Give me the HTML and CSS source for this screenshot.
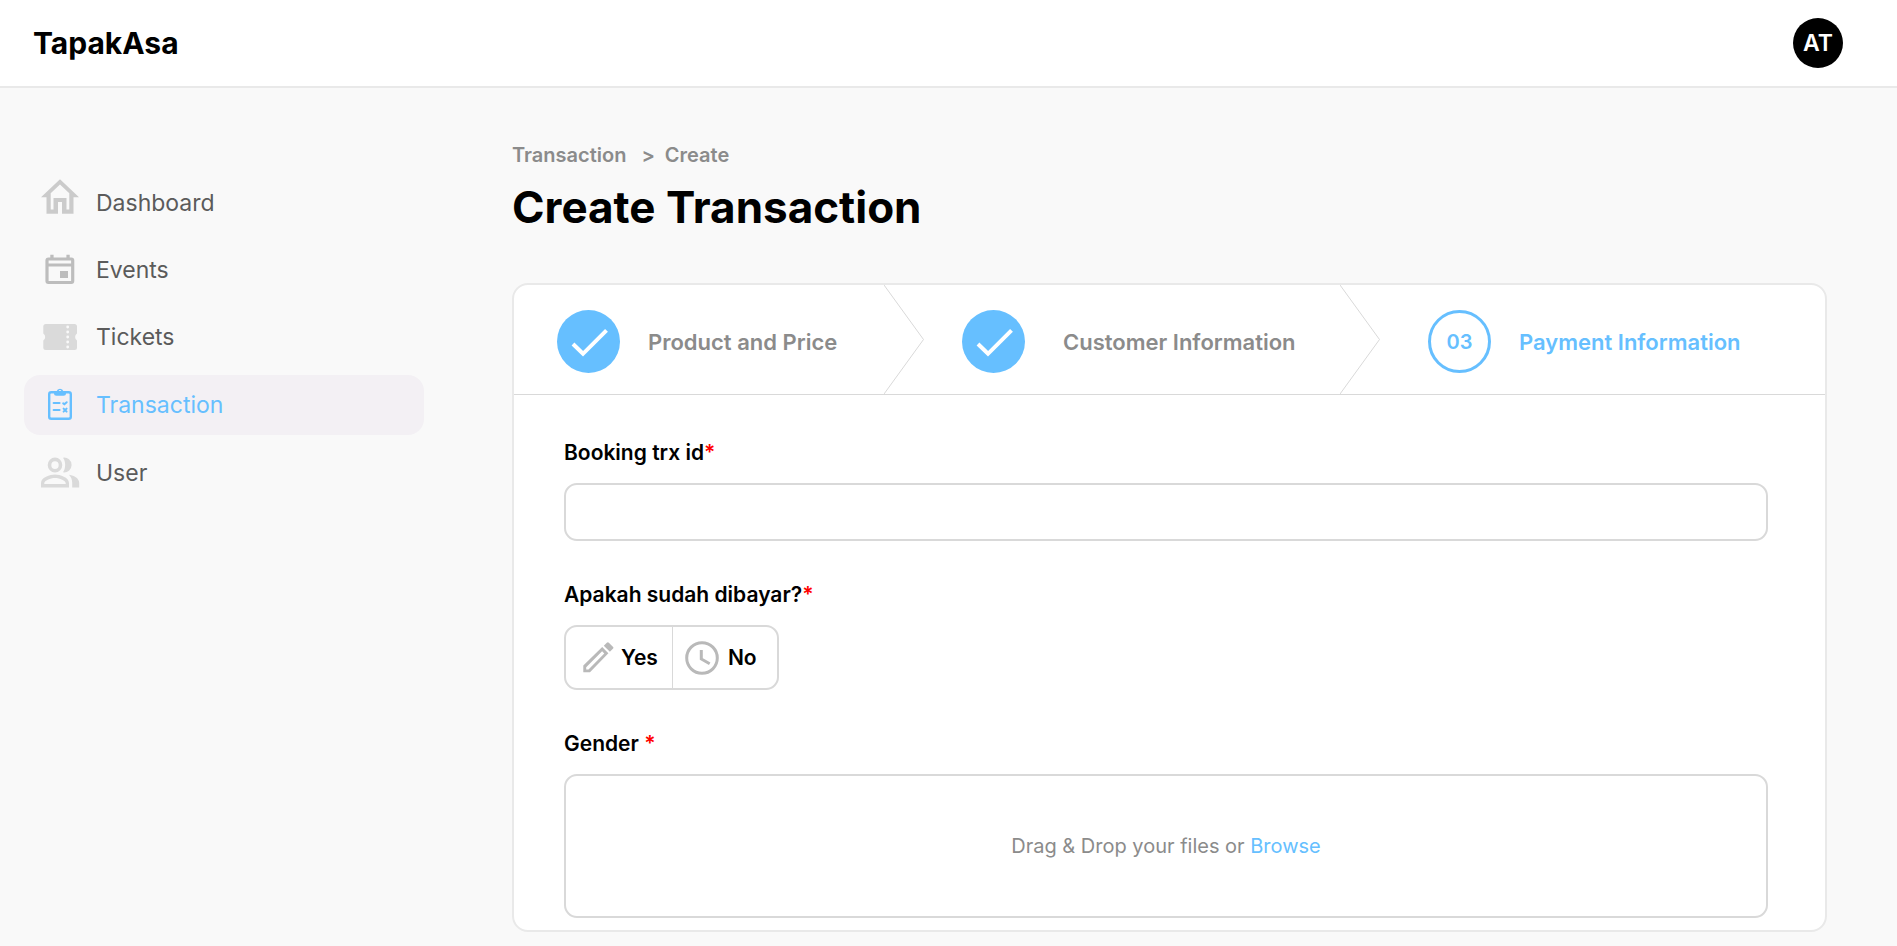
FILE: index.html
```html
<!DOCTYPE html>
<html lang="en">
<head>
<meta charset="utf-8">
<meta name="viewport" content="width=device-width, initial-scale=1">
<title>TapakAsa - Create Transaction</title>
<link rel="stylesheet" href="styles.css">
</head>
<body>
<header class="topbar">
  <a class="brand" href="#">TapakAsa</a>
  <button class="avatar" type="button" aria-label="Account">AT</button>
</header>
<div class="layout">
  <nav class="sidebar">
    <a class="nav-item" href="#">
      <svg class="nav-icon icon-home" viewBox="0 0 48 48" aria-hidden="true"><path fill-rule="evenodd" d="M24 .3 5 18.300h5.500v16.400H22V23h4v11.700h11.500V18.300H43ZM24 5.500l9.300 8.800v16.200h-2.800V19h-13v11.500h-2.800V14.300Z"/></svg>
      <span>Dashboard</span>
    </a>
    <a class="nav-item" href="#">
      <svg class="nav-icon icon-calendar" viewBox="0 0 48 48" aria-hidden="true"><path fill-rule="evenodd" d="M14.300 8.700h3.300v2.800h12.800V8.700h3.300v2.800h1.600a3 3 0 0 1 3 3V35a3 3 0 0 1-3 3H12.400a3 3 0 0 1-3-3V14.500a3 3 0 0 1 3-3h1.900ZM12.600 14.600v2.900h22.500v-2.900ZM12.600 20.500v14.400h22.500V20.500ZM24 25h8v7h-8Z"/></svg>
      <span>Events</span>
    </a>
    <a class="nav-item" href="#">
      <svg class="nav-icon icon-ticket" viewBox="0 0 48 48" aria-hidden="true"><path fill-rule="evenodd" d="M9.800 11h28.700a2.500 2.500 0 0 1 2.500 2.500v7.100a4 4 0 0 0 0 6.800v7.100a2.500 2.500 0 0 1-2.500 2.500H9.800a2.500 2.500 0 0 1-2.500-2.500v-7.100a4 4 0 0 0 0-6.800v-7.100A2.500 2.500 0 0 1 9.800 11Z"/><g class="ticket-holes"><circle cx="31.700" cy="14" r="1.400"/><circle cx="31.700" cy="19" r="1.400"/><circle cx="31.700" cy="24" r="1.400"/><circle cx="31.700" cy="29" r="1.400"/><circle cx="31.700" cy="34" r="1.400"/></g></svg>
      <span>Tickets</span>
    </a>
    <a class="nav-item active" href="#" aria-current="page">
      <svg class="nav-icon icon-clipboard" viewBox="0 0 48 48" aria-hidden="true"><rect class="line" x="13.200" y="11.200" width="21.600" height="26.600" rx="2"/><path fill-rule="evenodd" d="M18 10.300h2.600a3.500 3.500 0 0 1 6.800 0H30v2a2.500 2.500 0 0 1-2.500 2.500h-7a2.500 2.500 0 0 1-2.500-2.500ZM24 9a1.300 1.300 0 1 0 0 2.600A1.300 1.300 0 0 0 24 9Z"/><path class="line mark" d="M17.600 22h6M17.600 29h6M27.200 22.400l1.200.8 2.300-2M27.600 27.600l3 3M30.600 27.600l-3 3"/></svg>
      <span>Transaction</span>
    </a>
    <a class="nav-item" href="#">
      <svg class="nav-icon icon-users" viewBox="0 0 48 48" aria-hidden="true"><path fill-rule="evenodd" d="M19 8.500a7.300 7.500 0 1 0 0 15 7.300 7.500 0 1 0 0-15ZM19 12.200a3.700 3.900 0 1 1 0 7.800 3.700 3.900 0 1 1 0-7.800ZM5 38.500v-4.500C5 28.500 14 25.600 19 25.600s14 2.900 14 8.400v4.500ZM8.300 35h21.400v-1c0-2.200-6-5-10.700-5S8.300 31.800 8.300 34Z"/><path d="M27 8.700a7.400 7.400 0 1 1 0 14.600c2.900-3.800 2.900-10.800 0-14.600ZM33 25.800c5.600.9 10.200 3.700 10.200 8.200v4.500h-7V34c0-3.400-1.200-6.200-3.200-8.200Z"/></svg>
      <span>User</span>
    </a>
  </nav>
  <main class="content">
    <nav class="breadcrumb" aria-label="Breadcrumb">
      <a href="#">Transaction</a>
      <span class="separator">&gt;</span>
      <span>Create</span>
    </nav>
    <h1 class="title">Create Transaction</h1>
    <form class="card">
      <ol class="steps">
        <li class="step step-product">
          <svg class="badge done" viewBox="0 0 63 63" role="img" aria-label="Completed"><circle cx="31.500" cy="31.500" r="31.500"/><path d="M16 34l10 9.800L49.500 20.300"/></svg>
          <span>Product and Price</span>
          <svg class="chevron" viewBox="0 0 40 109" preserveAspectRatio="none" aria-hidden="true"><path d="M0 0l39.500 54.500L0 109"/></svg>
        </li>
        <li class="step step-customer">
          <svg class="badge done" viewBox="0 0 63 63" role="img" aria-label="Completed"><circle cx="31.500" cy="31.500" r="31.500"/><path d="M16 34l10 9.800L49.500 20.300"/></svg>
          <span>Customer Information</span>
          <svg class="chevron" viewBox="0 0 40 109" preserveAspectRatio="none" aria-hidden="true"><path d="M0 0l39.500 54.500L0 109"/></svg>
        </li>
        <li class="step step-payment" aria-current="step">
          <span class="badge number">03</span>
          <span>Payment Information</span>
        </li>
      </ol>
      <div class="fields">
        <div class="field">
          <label class="label" for="booking">Booking trx id<span class="required">*</span></label>
          <input class="input" id="booking" type="text" required>
        </div>
        <div class="field">
          <span class="label" id="paid-label">Apakah sudah dibayar?<span class="required">*</span></span>
          <div class="choice" role="group" aria-labelledby="paid-label">
            <button class="option option-yes" type="button">
              <svg class="option-icon" viewBox="0 0 31 31" aria-hidden="true"><path fill-rule="evenodd" d="M.3 30.300v-6.700L19.200 5l6.200 6.200L7 30.300ZM3.200 27.400h2.300L21.300 11.500l-2.200-2.200L3.200 25.200Z"/><path d="M20.800 3.700l3-3a1.500 1.500 0 0 1 2.100 0l4 4a1.500 1.500 0 0 1 0 2.100l-3 3Z"/></svg>
              <span>Yes</span>
            </button>
            <button class="option option-no" type="button">
              <svg class="option-icon clock" viewBox="0 0 34 34" aria-hidden="true"><circle cx="17" cy="17" r="15.300"/><path d="M16.300 9v9l8.400 4.800"/></svg>
              <span>No</span>
            </button>
          </div>
        </div>
        <div class="field">
          <span class="label" id="file-label">Gender <span class="required">*</span></span>
          <div class="dropzone" role="group" aria-labelledby="file-label">
            <p>Drag &amp; Drop your files or <button class="browse" type="button">Browse</button></p>
          </div>
        </div>
      </div>
    </form>
  </main>
</div>
</body>
</html>
```

FILE: styles.css
```css
* {
  box-sizing: border-box;
}

body {
  margin: 0;
  min-height: 100vh;
  background: #f9f9f9;
  color: #000;
  font-family: Inter, "Liberation Sans", sans-serif;
}

a {
  color: inherit;
  text-decoration: none;
}

button {
  padding: 0;
  border: 0;
  background: none;
  color: inherit;
  font: inherit;
  cursor: pointer;
}

.topbar {
  display: flex;
  align-items: center;
  justify-content: space-between;
  height: 88px;
  padding: 0 54px 0 33px;
  border-bottom: 2px solid #e9e9e9;
  background: #fff;
}

.brand {
  font-size: 30px;
  font-weight: 700;
}

.avatar {
  width: 50px;
  height: 50px;
  border-radius: 50%;
  background: #000;
  color: #fff;
  font-size: 23px;
  font-weight: 600;
}

.layout {
  display: grid;
  grid-template-columns: 400px minmax(0, 1fr);
  column-gap: 88px;
  padding: 0 70px 13px 24px;
}

.sidebar {
  display: flex;
  flex-direction: column;
  gap: 9px;
  padding-top: 86px;
}

.nav-item {
  display: flex;
  align-items: center;
  gap: 12px;
  height: 58px;
  padding-left: 12px;
  border-radius: 16px;
  color: #5b5b5b;
  font-size: 23px;
}

.nav-item.active {
  height: 60px;
  background: #f3f0f4;
  color: #66bfff;
}

.nav-icon {
  width: 48px;
  height: 48px;
}

.icon-home {
  fill: #cbcbcb;
}

.icon-calendar {
  fill: #bdbdbd;
}

.icon-ticket,
.icon-users {
  fill: #dadada;
}

.ticket-holes {
  fill: #f9f9f9;
}

.icon-clipboard {
  fill: #66bfff;
}

.icon-clipboard .line {
  fill: none;
  stroke: #66bfff;
  stroke-width: 2.4;
}

.icon-clipboard .mark {
  stroke-width: 2;
  stroke-linecap: round;
}

.content {
  padding-top: 55px;
}

.breadcrumb {
  display: flex;
  color: #8b8b8b;
  font-size: 20px;
  font-weight: 600;
  line-height: 24px;
}

.separator {
  margin: 0 10px 0 15px;
}

.title {
  margin: 14px 0 50px;
  font-size: 44px;
  font-weight: 700;
  line-height: 52px;
}

.card {
  border: 2px solid #e9e9e9;
  border-radius: 16px;
  background: #fff;
}

.steps {
  display: grid;
  grid-template-columns: 410fr 456fr 445fr;
  margin: 0;
  padding: 0;
  border-bottom: 1px solid #d9d9d9;
  list-style: none;
}

.step {
  position: relative;
  display: flex;
  align-items: center;
  height: 109px;
  padding-top: 4px;
  color: #8b8b8b;
  font-size: 22px;
  font-weight: 600;
  white-space: nowrap;
}

.step-product {
  gap: 28px;
  padding-left: 43px;
}

.step-customer {
  gap: 38px;
  padding-left: 38px;
}

.step-payment {
  gap: 28px;
  padding-left: 48px;
  color: #66bfff;
}

.badge {
  flex: none;
  width: 63px;
  height: 63px;
}

.done {
  fill: #66bfff;
}

.done path {
  fill: none;
  stroke: #fff;
  stroke-width: 4;
}

.number {
  display: flex;
  align-items: center;
  justify-content: center;
  border: 3px solid #66bfff;
  border-radius: 50%;
  font-size: 20px;
}

.chevron {
  position: absolute;
  top: 0;
  right: 0;
  width: 40px;
  height: 100%;
  fill: none;
  stroke: #d9d9d9;
}

.fields {
  display: flex;
  flex-direction: column;
  gap: 41px;
  padding: 45px 57px 12px 50px;
}

.field {
  display: flex;
  flex-direction: column;
  align-items: flex-start;
  gap: 17px;
}

.label {
  font-size: 21px;
  font-weight: 600;
  line-height: 26px;
}

.required {
  color: #f00;
}

.input,
.choice,
.dropzone {
  border: 2px solid #d9d9d9;
  border-radius: 13px;
  background: #fff;
}

.input {
  width: 100%;
  height: 58px;
  padding: 0 16px;
  font: inherit;
  font-size: 21px;
}

.choice {
  display: flex;
  height: 65px;
}

.option {
  display: flex;
  align-items: center;
  font-size: 21px;
  font-weight: 600;
}

.option-yes {
  gap: 7px;
  padding: 0 14px 0 17px;
  border-right: 1px solid #d9d9d9;
}

.option-no {
  gap: 9px;
  padding: 0 20px 0 12px;
}

.option-icon {
  width: 31px;
  height: 31px;
  fill: #b9b9b9;
}

.option-icon.clock {
  width: 34px;
  height: 34px;
  fill: none;
  stroke: #b9b9b9;
  stroke-width: 3;
}

.dropzone {
  display: flex;
  align-items: center;
  justify-content: center;
  width: 100%;
  height: 144px;
  color: #8b8b8b;
  font-size: 20px;
}

.dropzone p {
  margin: 0;
}

.browse {
  color: #66bfff;
}
```
